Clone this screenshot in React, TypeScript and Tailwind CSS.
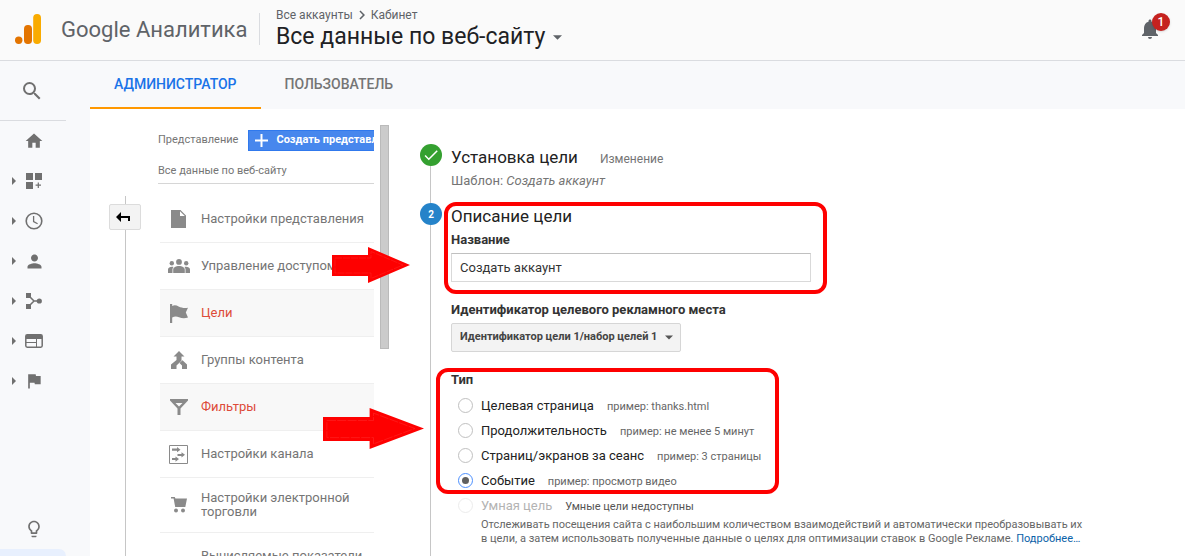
import React, { useState } from 'react';
import {
  MdSearch,
  MdHome,
  MdPerson,
  MdFlag,
  MdOutlineLightbulb,
  MdNotifications,
  MdCheck,
  MdChevronRight,
} from 'react-icons/md';

type IconProps = { className?: string };

const DashboardIcon: React.FC<IconProps> = ({ className }) => (
  <svg viewBox="0 0 16 16" fill="currentColor" className={className} aria-hidden="true">
    <path d="M0 0h7v7H0zM9 0h7v7H9zM0 9h7v7H0zM11.7 9.500h1.200v2.100H15v1.200h-2.100v2.100h-1.200v-2.100H9.600v-1.200h2.100z" />
  </svg>
);

const ClockIcon: React.FC<IconProps> = ({ className }) => (
  <svg viewBox="0 0 18 18" fill="none" stroke="currentColor" strokeWidth="1.6" className={className} aria-hidden="true">
    <circle cx="9" cy="9" r="7.8" />
    <path d="M8.6 4v5.6l4 2.2" strokeWidth="1.3" />
  </svg>
);

const FlowIcon: React.FC<IconProps> = ({ className }) => (
  <svg viewBox="0 0 16 16" fill="currentColor" className={className} aria-hidden="true">
    <path d="M0 0h5v5H0zM0 11h5v5H0z" />
    <path d="M3 3l5 5-5 5M8 8h5" fill="none" stroke="currentColor" strokeWidth="1.5" />
    <circle cx="13.3" cy="8" r="2.6" />
  </svg>
);

const BehaviorIcon: React.FC<IconProps> = ({ className }) => (
  <svg viewBox="0 0 18 14" fill="none" stroke="currentColor" className={className} aria-hidden="true">
    <rect x="0.8" y="0.8" width="16.4" height="12.4" rx="1.4" strokeWidth="1.5" />
    <path d="M1 1h16v4H1z" fill="currentColor" stroke="none" />
    <path d="M1 8.5h10.5M11.5 5v8" strokeWidth="1" />
  </svg>
);

const FileIcon: React.FC<IconProps> = ({ className }) => (
  <svg viewBox="0 0 15 18" fill="currentColor" fillRule="evenodd" className={className} aria-hidden="true">
    <path d="M0 0h9.500L15 5.500V18H0zM9 1.200V6h4.800z" />
  </svg>
);

const PeopleIcon: React.FC<IconProps> = ({ className }) => (
  <svg viewBox="0 0 22 14" fill="currentColor" className={className} aria-hidden="true">
    <circle cx="3.800" cy="4.200" r="2.200" />
    <circle cx="11" cy="2.900" r="2.900" />
    <circle cx="18.200" cy="4.200" r="2.200" />
    <path d="M0 14v-3.500c0-1.900 2-2.800 4-2.800.6 0 1.100.1 1.600.2-.8.800-1.100 1.600-1.100 2.600V14zM5.200 14v-3.500c0-2.300 2.900-3.500 5.800-3.500s5.800 1.200 5.800 3.500V14zM22 14v-3.500c0-1.900-2-2.800-4-2.800-.6 0-1.100.1-1.600.2.8.800 1.100 1.600 1.100 2.600V14z" />
  </svg>
);

const CartIcon: React.FC<IconProps> = ({ className }) => (
  <svg viewBox="0 0 16 16" fill="currentColor" className={className} aria-hidden="true">
    <path d="M0 0h3.800l.6 1.500H16l-1.700 8.500H4.200L2.600 1.600H0z" />
    <circle cx="5" cy="13.500" r="2" />
    <circle cx="12" cy="13.500" r="2" />
  </svg>
);

const WavyFlagIcon: React.FC<IconProps> = ({ className }) => (
  <svg viewBox="0 0 18 19" fill="currentColor" className={className} aria-hidden="true">
    <path d="M0 0h2.200v2c2-1.200 4.200-.9 6.400.5 3 1.400 6 1.800 9.400 1.200l-2.200 4.700 2.200 5c-3 1.200-6 1-9-.2-2.400-.9-4.600-.8-6.800.2V19H0z" />
  </svg>
);

const MergeIcon: React.FC<IconProps> = ({ className }) => (
  <svg viewBox="0 0 16 18" fill="currentColor" className={className} aria-hidden="true">
    <path d="M8 0l5.500 5.500h-3v4.300L5.500 14.500V18H0v-4.500L5.500 9V5.500h-3z" />
    <path d="M8.500 12l3-2.700L16 13.500V18h-5v-3.500z" />
  </svg>
);

const FunnelIcon: React.FC<IconProps> = ({ className }) => (
  <svg viewBox="0 0 18 16" fill="currentColor" fillRule="evenodd" className={className} aria-hidden="true">
    <path d="M0 0h18v1.500L10.500 9.500V16h-3V9.500L0 1.500zM5.500 4L9 7.600 12.500 4z" />
  </svg>
);

const ChannelIcon: React.FC<IconProps> = ({ className }) => (
  <svg viewBox="0 0 19 19" fill="currentColor" className={className} aria-hidden="true">
    <path d="M.5.5h18v18H.5z" fill="none" stroke="currentColor" />
    <path d="M3 3.500h5V2l3.500 2.700L8 7.300V5.800H3zM8.500 8.900h4V7.200L16 9.800l-3.500 2.600v-1.500h-4zM3 13h3.500v-1.600l3.500 2.700-3.500 2.600V15H3z" />
  </svg>
);

const CaretDown: React.FC<IconProps> = ({ className }) => (
  <svg viewBox="0 0 10 5" fill="currentColor" className={className} aria-hidden="true">
    <path d="M0 0h10L5 5z" />
  </svg>
);

const RedArrow: React.FC<IconProps> = ({ className }) => (
  <svg viewBox="0 0 78 36" preserveAspectRatio="none" fill="#fe0000" className={className} aria-hidden="true">
    <path d="M0 8h36V0l42 18-42 18v-7H0z" />
    <path d="M3 11h36V4.500L71 18 39 31.500V26H3z" fill="none" stroke="#ff3030" strokeWidth="0.4" strokeDasharray="7 1" />
  </svg>
);

const sideNav = [
  { label: 'Главная', icon: <MdHome className="size-5" />, expandable: false },
  { label: 'Персонализация', icon: <DashboardIcon className="size-4" />, expandable: true },
  { label: 'В реальном времени', icon: <ClockIcon className="size-[18px]" />, expandable: true },
  { label: 'Аудитория', icon: <MdPerson className="size-[21px]" />, expandable: true },
  { label: 'Источники трафика', icon: <FlowIcon className="size-4" />, expandable: true },
  { label: 'Поведение', icon: <BehaviorIcon className="w-[18px] h-[14px]" />, expandable: true },
  { label: 'Конверсии', icon: <MdFlag className="size-5" />, expandable: true },
];

const settings = [
  { label: 'Настройки представления', icon: <FileIcon className="w-[15px] h-[18px]" />, active: false },
  { label: 'Управление доступом', icon: <PeopleIcon className="w-[22px] h-[14px]" />, active: false },
  { label: 'Цели', icon: <WavyFlagIcon className="w-[18px] h-[19px]" />, active: true },
  { label: 'Группы контента', icon: <MergeIcon className="w-4 h-[18px]" />, active: false },
  { label: 'Фильтры', icon: <FunnelIcon className="w-[18px] h-4" />, active: true },
  { label: 'Настройки канала', icon: <ChannelIcon className="size-[19px]" />, active: false },
  { label: 'Настройки электронной торговли', icon: <CartIcon className="size-4" />, active: false },
  { label: 'Вычисляемые показатели', icon: null, active: false },
];

const goalTypes = [
  { id: 'page', label: 'Целевая страница', hint: 'пример: thanks.html' },
  { id: 'duration', label: 'Продолжительность', hint: 'пример: не менее 5 минут' },
  { id: 'screens', label: 'Страниц/экранов за сеанс', hint: 'пример: 3 страницы' },
  { id: 'event', label: 'Событие', hint: 'пример: просмотр видео' },
];

const radioClasses =
  'appearance-none size-[15px] shrink-0 rounded-full border border-[#c0c0c0] bg-white p-[3px] bg-clip-content checked:border-[#4d90fe] checked:bg-[#5f5f5f] disabled:border-[#ececec]';

const Header: React.FC = () => (
  <header className="flex h-[61px] shrink-0 items-center border-b border-[#dadce0] bg-[#fafafa] px-[15px] pb-[2px]">
    <svg viewBox="0 0 26 30" className="h-[30px] w-[26px]" aria-hidden="true">
      <circle cx="3.700" cy="26.200" r="3.700" fill="#e37400" />
      <rect x="9" y="11" width="8" height="19" rx="3.800" fill="#e37400" />
      <rect x="18.200" y="0" width="7.800" height="30" rx="3.800" fill="#f9ab00" />
    </svg>
    <div className="ml-5 w-[182px] text-[22px] whitespace-nowrap text-[#5f6368]">Google Аналитика</div>
    <div className="ml-4 h-8 w-px bg-[#dadce0]" />
    <div className="ml-4">
      <nav className="flex h-4 items-center text-[12px] text-[#5f6368]">
        <a href="#accounts">Все аккаунты</a>
        <MdChevronRight className="size-[18px]" />
        <a href="#cabinet">Кабинет</a>
      </nav>
      <button className="flex h-7 items-center gap-2 text-[23px] text-[#202124]">
        Все данные по веб-сайту
        <CaretDown className="h-[5px] w-[9px] text-[#5f6368]" />
      </button>
    </div>
    <button className="relative ml-auto text-[#5f6368]" aria-label="Уведомления">
      <MdNotifications className="mr-2 size-6" />
      <span className="absolute -top-1 right-0 flex size-[18px] items-center justify-center rounded-full bg-[#c5221f] text-[12px] font-medium text-white shadow">
        1
      </span>
    </button>
  </header>
);

const Sidebar: React.FC = () => (
  <aside className="flex w-[90px] shrink-0 flex-col bg-[#f8f9fb] text-[#707070]">
    <div className="flex h-[60px] w-[66px] items-center border-b border-[#dadce0] pl-5">
      <button aria-label="Поиск">
        <MdSearch className="block size-6" />
      </button>
    </div>
    <nav>
      {sideNav.map(({ label, icon, expandable }) => (
        <a key={label} href="#report" aria-label={label} className="flex h-10 items-center pl-3">
          <span className="w-[11px]">
            {expandable && (
              <svg viewBox="0 0 4 8" fill="currentColor" className="h-2 w-1" aria-hidden="true">
                <path d="M0 0l4 4-4 4z" />
              </svg>
            )}
          </span>
          <span className="flex w-[22px] justify-center">{icon}</span>
        </a>
      ))}
    </nav>
    <a href="#discover" aria-label="Рекомендации" className="mt-auto flex h-10 shrink-0 items-center pl-6">
      <MdOutlineLightbulb className="size-5" />
    </a>
    <div className="h-[7px] w-[66px] shrink-0 rounded-tr-full bg-[#e8f0fe]" />
  </aside>
);

const SettingsColumn: React.FC = () => (
  <div className="w-[216px] shrink-0 overflow-hidden pt-[21px]">
    <div className="flex items-center gap-[10px] text-[11px] whitespace-nowrap text-[#757575]">
      Представление
      <button className="flex h-[21px] shrink-0 items-center gap-2 border border-[#3079ed] bg-[#4787ed] pl-[6px] text-[11px] font-bold text-white">
        <svg viewBox="0 0 13 13" className="size-[13px]" stroke="currentColor" strokeWidth="2" aria-hidden="true">
          <path d="M6.500 0v13M0 6.500h13" />
        </svg>
        Создать представление
      </button>
    </div>
    <div className="flex h-[33px] items-center border-b border-[#d6d6d6] pt-2 text-[11px] text-[#757575]">
      Все данные по веб-сайту
    </div>
    <ul className="mt-3 ml-[2px]">
      {settings.map(({ label, icon, active }) => (
        <li key={label} className={active ? 'border-b border-[#efefef] bg-[#f8f8f8]' : 'border-b border-[#efefef]'}>
          <a
            href="#setting"
            className={
              active
                ? 'flex min-h-[46px] items-center py-[13px] text-[13px] leading-[14px] text-[#dd4b39]'
                : 'flex min-h-[46px] items-center py-[13px] text-[13px] leading-[14px] text-[#757575]'
            }
          >
            <span className="flex w-[41px] shrink-0 justify-center pr-1 text-[#8a8a8a]">{icon}</span>
            {label}
          </a>
        </li>
      ))}
    </ul>
  </div>
);

const GoalForm: React.FC = () => {
  const [name, setName] = useState('Создать аккаунт');
  const [type, setType] = useState('event');

  return (
    <form className="relative min-w-0 flex-1 pl-8 text-[#222]">
      <div className="absolute top-9 bottom-0 left-[11px] w-px bg-[#c6c6c6]" />
      <section className="relative pt-[39px]">
        <span className="absolute top-[35px] -left-[31px] flex size-[22px] items-center justify-center rounded-full bg-[#34a030] text-white">
          <MdCheck className="size-[18px]" />
        </span>
        <div className="flex items-baseline gap-[22px]">
          <h2 className="text-[17px] leading-[18px]">Установка цели</h2>
          <a href="#edit" className="text-[12px] text-[#757575]">Изменение</a>
        </div>
        <p className="mt-1 text-[13px] leading-[18px] text-[#757575]">
          Шаблон: <i>Создать аккаунт</i>
        </p>
      </section>

      <section className="relative mt-[17px]">
        <span className="absolute -top-1 -left-[31px] flex size-[22px] items-center justify-center rounded-full bg-[#2583c9] text-[10px] font-bold text-white">
          2
        </span>
        <div className="pointer-events-none absolute -top-[5px] -left-[7px] h-[92px] w-[383px] rounded-xl border-4 border-[#fe0000]" />
        <h2 className="text-[17px] leading-[18px]">Описание цели</h2>
        <label htmlFor="goal-name" className="mt-[7px] block text-[13px] leading-4 font-bold text-[#333]">
          Название
        </label>
        <input
          id="goal-name"
          value={name}
          onChange={(e) => setName(e.target.value)}
          className="mt-[5px] block h-[29px] w-[360px] border border-[#d9d9d9] border-t-[#c0c0c0] px-2 text-[13px] text-[#333]"
        />
      </section>

      <section className="mt-5">
        <label htmlFor="goal-slot" className="block text-[13px] leading-4 font-bold text-[#333]">
          Идентификатор целевого рекламного места
        </label>
        <div className="relative mt-[5px] w-[230px]">
          <select
            id="goal-slot"
            className="block h-[29px] w-full appearance-none rounded-xs border border-[#d6d6d6] bg-[#f3f3f3] pl-2 text-[11px] font-bold text-[#444]"
          >
            <option>Идентификатор цели 1/набор целей 1</option>
          </select>
          <CaretDown className="pointer-events-none absolute top-3 right-2 h-[5px] w-2 text-[#555]" />
        </div>
      </section>

      <fieldset className="relative mt-5">
        <div className="pointer-events-none absolute -top-5 -left-[15px] h-[126px] w-[343px] rounded-xl border-4 border-[#fe0000]" />
        <legend className="text-[13px] leading-4 font-bold text-[#333]">Тип</legend>
        <div className="mt-[5px] pl-[7px]">
          {goalTypes.map(({ id, label, hint }) => (
            <label key={id} className="flex h-[25px] items-center whitespace-nowrap">
              <input
                type="radio"
                name="goal-type"
                checked={type === id}
                onChange={() => setType(id)}
                className={radioClasses}
              />
              <span className="ml-2 flex items-baseline gap-[13px] text-[13px]">
                {label}
                <span className="text-[11px] text-[#666]">{hint}</span>
              </span>
            </label>
          ))}
          <label className="flex h-[25px] items-center whitespace-nowrap">
            <input type="radio" name="goal-type" disabled className={radioClasses} />
            <span className="ml-2 flex items-baseline gap-[13px] text-[13px] text-[#b3b3b3]">
              Умная цель
              <span className="text-[11px] text-[#555]">Умные цели недоступны</span>
            </span>
          </label>
        </div>
        <p className="max-w-[638px] pl-[30px] text-[11px] leading-[14px] text-[#666]">
          Отслеживать посещения сайта с наибольшим количеством взаимодействий и автоматически преобразовывать их
          в цели, а затем использовать полученные данные о целях для оптимизации ставок в Google Рекламе.{' '}
          <a href="#more" className="text-[#0b62a8]">Подробнее…</a>
        </p>
      </fieldset>
    </form>
  );
};

export default function App() {
  return (
    <div className="relative flex h-screen flex-col overflow-hidden bg-white font-['Roboto',sans-serif]">
      <Header />
      <div className="flex min-h-0 flex-1">
        <Sidebar />
        <div className="flex min-w-0 flex-1 flex-col">
          <nav className="flex h-12 shrink-0 bg-[#f8f9fb] text-[14px] font-medium">
            <a
              href="#admin"
              className="flex items-center border-b-2 border-[#ff9800] px-6 text-[#1a73e8]"
            >
              АДМИНИСТРАТОР
            </a>
            <a href="#user" className="flex items-center border-b-2 border-transparent px-6 text-[#757575]">
              ПОЛЬЗОВАТЕЛЬ
            </a>
          </nav>
          <main className="flex min-h-0 flex-1 pl-[19px]">
            <div className="flex w-[49px] shrink-0 flex-col pt-[87px]">
              <div className="ml-4 h-2 w-px bg-[#c6c6c6]" />
              <button
                className="flex h-[26px] w-8 items-center rounded-xs border border-[#dcdcdc] bg-[#f3f3f3] pl-[6px] text-black"
                aria-label="Назад"
              >
                <svg viewBox="0 0 14 10" fill="currentColor" className="h-[10px] w-[14px]" aria-hidden="true">
                  <path d="M0 5l5-5v4h9v5h-2V6H5v4z" />
                </svg>
              </button>
              <div className="ml-4 w-px flex-1 bg-[#c6c6c6]" />
            </div>
            <SettingsColumn />
            <div className="mt-4 mr-[30px] ml-[6px] h-56 w-[9px] shrink-0 border border-[#bababa] bg-[#cbcbcb]" />
            <GoalForm />
          </main>
        </div>
      </div>
      <RedArrow className="pointer-events-none absolute top-[247px] left-[332px] h-9 w-[78px]" />
      <RedArrow className="pointer-events-none absolute top-[408px] left-[323px] h-[41px] w-[101px]" />
    </div>
  );
}
